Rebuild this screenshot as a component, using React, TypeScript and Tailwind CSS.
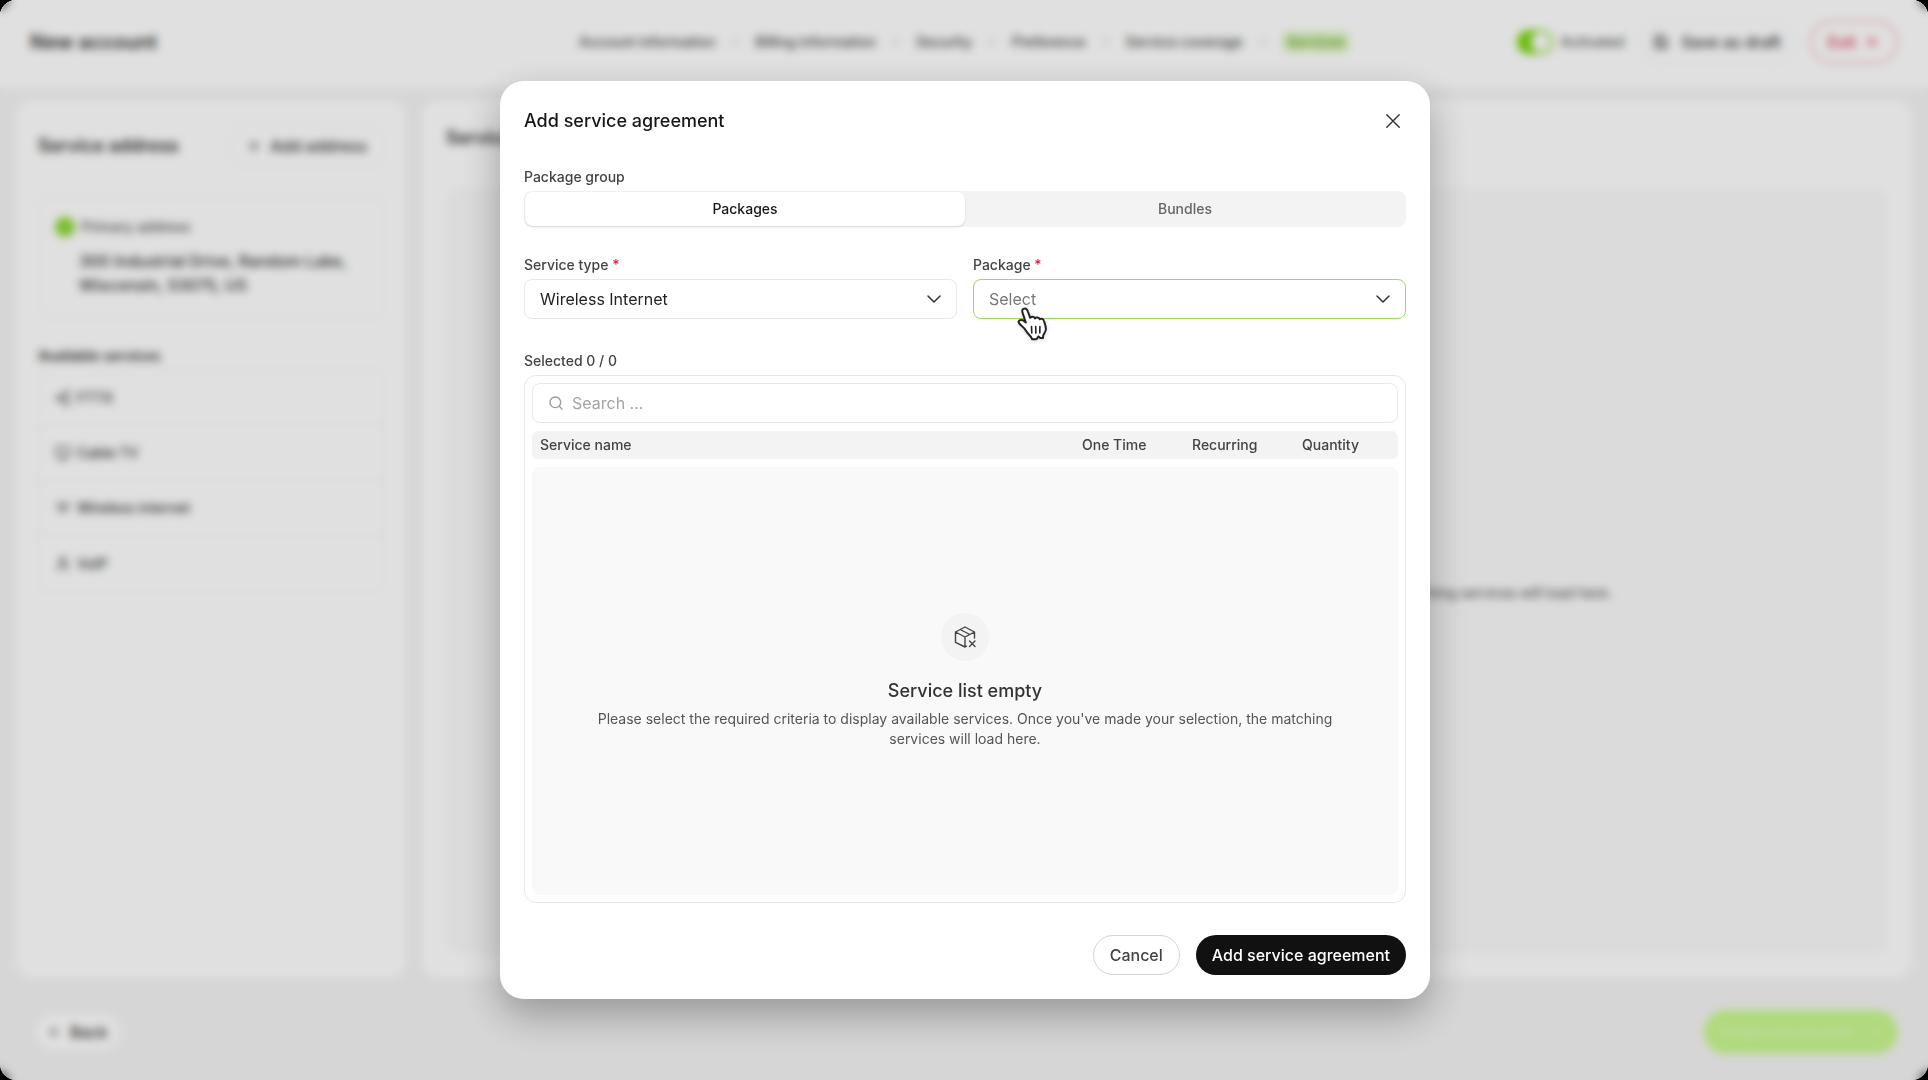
import React, { useState } from 'react';
import {
  ArrowLeft,
  ArrowRight,
  Check,
  ChevronRight,
  Monitor,
  Plus,
  Save,
  Search,
  Share2,
  User,
  Wifi,
  X,
} from 'lucide-react';

const steps = [
  'Account information',
  'Billing information',
  'Security',
  'Preference',
  'Service coverage',
];

const availableServices = [
  { name: 'FTTX', icon: Share2 },
  { name: 'Cable TV', icon: Monitor },
  { name: 'Wireless internet', icon: Wifi },
  { name: 'VoIP', icon: User },
];

const emptyText =
  "Please select the required criteria to display available services. Once you've made your selection, the matching services will load here.";

const CloseIcon: React.FC = () => (
  <svg width="14" height="14" viewBox="0 0 14 14" fill="none" stroke="currentColor" strokeWidth="1.4" strokeLinecap="round">
    <path d="M.8.8l12.400 12.400M13.200.8L.8 13.200" />
  </svg>
);

const ChevronIcon: React.FC = () => (
  <svg
    width="14"
    height="8"
    viewBox="0 0 14 8"
    fill="none"
    stroke="currentColor"
    strokeWidth="1.5"
    strokeLinecap="round"
    strokeLinejoin="round"
    className="pointer-events-none absolute top-4 right-4 text-[#333333]"
  >
    <path d="M1 1l6 6 6-6" />
  </svg>
);

const BoxIcon: React.FC = () => (
  <svg
    width="24"
    height="24"
    viewBox="0 0 24 24"
    fill="none"
    stroke="currentColor"
    strokeWidth="1.4"
    strokeLinecap="round"
    strokeLinejoin="round"
  >
    <path d="M21.5 13V7L12 2 2.500 7v10.300L12 22V12L2.500 7M12 12l9.500-5M7.200 4.500l9.600 5M12 22l1.500-.8" />
    <path d="M16.500 16l5.500 5.500M22 16l-5.500 5.500" />
  </svg>
);

const HandCursor: React.FC = () => (
  <svg width="31" height="34" viewBox="0 0 31 34" className="pointer-events-none absolute top-7 left-11 drop-shadow-sm">
    <path
      d="M5.500 5.500C4.700 3 6 1.500 7.700 1.500c1.800 0 2.600 1.200 3.200 3l2.300 6.300c.6-1.600 4.200-1.600 4.800.6.900-1.500 4-1.300 4.700.9 1.300-1.100 3.700-.5 4.300 1.700.9 2.700 2 5.400 1.900 8.200-.2 2.700-1.900 4.300-2.700 6.300l-.3 2.600-2.600-.1-1.800-1.600-1.800 2.600c-1.300.2-3.200.3-4.700 0l-1-2.200c-1.600-1.700-3.400-3.300-4.700-5.500-1.300-2.200-2.700-4-4.500-5.300C3.200 17.600 1 15.800 1.700 14.200c1-1.900 3.800-1.400 5.300-.3l1.800 1.600z"
      fill="#ffffff"
      stroke="#222222"
      strokeWidth="2"
      strokeLinejoin="round"
    />
    <path d="M14.500 19.500l.3 6.500M18.700 19.500l.1 6.500M22.900 19.500l-.1 6.500" fill="none" stroke="#222222" strokeWidth="1.600" strokeLinecap="round" />
  </svg>
);

const AccountPage: React.FC = () => (
  <div className="flex h-full flex-col bg-[#f4f4f4] text-[#333333]">
    <header className="grid grid-cols-[1fr_auto_1fr] items-center bg-white px-[30px] pt-5 pb-6">
      <h1 className="text-xl font-semibold">New account</h1>

      <nav className="flex items-center gap-3 text-sm font-medium text-[#444444]">
        {steps.map((step) => (
          <React.Fragment key={step}>
            <a href="#">{step}</a>
            <ChevronRight size={16} className="text-[#cccccc]" />
          </React.Fragment>
        ))}
        <a href="#" className="rounded-md bg-[#dcf5bd] px-1 text-[#6ba32f]">
          Services
        </a>
      </nav>

      <div className="flex items-center justify-end gap-4">
        <label className="flex items-center gap-2 text-sm font-medium text-[#555555]">
          <input type="checkbox" defaultChecked className="peer sr-only" />
          <span className="flex h-6 w-9 items-center justify-end rounded-full bg-[#78d60c] p-0.5">
            <span className="h-5 w-5 rounded-full bg-white" />
          </span>
          Activated
        </label>
        <button className="flex h-11 items-center gap-3 rounded-full border border-[#eeeeee] px-3 text-base font-medium">
          <Save size={16} />
          Save as draft
        </button>
        <button className="flex h-11 items-center gap-2 rounded-full border-2 border-[#f4b8bf] px-4 text-base font-medium text-[#dc3545]">
          Exit
          <X size={16} />
        </button>
      </div>
    </header>

    <main className="flex flex-1 gap-4 px-4 pt-3">
      {/* Direcciones y servicios */}
      <section className="w-[390px] rounded-2xl bg-white px-[22px] py-5">
        <div className="mt-1 flex items-center justify-between">
          <h2 className="text-lg font-semibold">Service address</h2>
          <button className="flex h-11 items-center gap-2 rounded-full border border-[#eeeeee] px-4 text-base font-medium">
            <Plus size={16} />
            Add address
          </button>
        </div>

        <div className="mt-7 rounded-xl border border-[#eeeeee] px-4 py-5">
          <div className="flex items-center gap-1.5 text-sm font-medium text-[#555555]">
            <span className="flex h-5 w-5 items-center justify-center rounded-full bg-[#86d62a] text-white">
              <Check size={12} />
            </span>
            Primary address
          </div>
          <p className="mt-3 ml-6 text-base font-medium">300 Industrial Drive, Random Lake, Wisconsin, 53075, US</p>
        </div>

        <h3 className="mt-7 text-sm font-semibold">Available services</h3>
        <ul className="mt-1 divide-y divide-[#eeeeee] rounded-xl border border-[#eeeeee]">
          {availableServices.map(({ name, icon: Icon }) => (
            <li key={name} className="flex h-[55px] items-center gap-1.5 px-4 text-sm font-medium">
              <Icon size={16} />
              {name}
            </li>
          ))}
        </ul>
      </section>

      <section className="flex flex-1 flex-col rounded-2xl bg-white p-6">
        <h2 className="text-lg font-semibold">Services</h2>
        <div className="mt-9 flex flex-1 items-center justify-center rounded-xl bg-[#fafafa]">
          <p className="mt-11 text-sm text-[#444444]">{emptyText}</p>
        </div>
      </section>
    </main>

    <footer className="flex items-center justify-between px-[30px] pt-8 pb-[26px]">
      <button className="ml-1.5 flex h-9 items-center gap-2 rounded-full bg-white px-3 text-base font-medium">
        <ArrowLeft size={14} />
        Back
      </button>
      <button className="flex h-11 items-center gap-3 rounded-full bg-[#c9f98f] px-4 text-sm font-medium text-[#dffabf]">
        Create new account
        <ArrowRight size={16} />
      </button>
    </footer>
  </div>
);

const App: React.FC = () => {
  const [group, setGroup] = useState('Packages');
  const [search, setSearch] = useState('');

  return (
    <div className="h-screen bg-black font-['Inter',sans-serif]">
      <div className="relative h-full overflow-hidden rounded-2xl">
        <AccountPage />

        {/* Modal */}
        <div className="absolute inset-0 flex items-center justify-center bg-black/12 pl-0.5 backdrop-blur-xs">
          <div
            role="dialog"
            aria-labelledby="dialog-title"
            className="flex h-[85vh] w-full max-w-[930px] flex-col rounded-3xl bg-white px-6 pt-[26px] pb-6 shadow-[0_16px_40px_rgba(0,0,0,0.3)]"
          >
            <div className="flex items-center justify-between">
              <h2 id="dialog-title" className="text-lg font-medium text-[#171717]">
                Add service agreement
              </h2>
              <button aria-label="Close" className="p-1.5 text-[#333333]">
                <CloseIcon />
              </button>
            </div>

            <div className="mt-8 text-sm font-medium text-[#444444]">Package group</div>
            <div className="mt-1 grid h-9 grid-cols-2 rounded-lg bg-[#f3f3f3] p-px text-sm font-medium">
              {['Packages', 'Bundles'].map((item) => (
                <button
                  key={item}
                  onClick={() => setGroup(item)}
                  className={
                    group === item
                      ? 'rounded-lg bg-white text-[#171717] shadow-sm'
                      : 'rounded-lg text-[#666666]'
                  }
                >
                  {item}
                </button>
              ))}
            </div>

            <div className="mt-7 grid grid-cols-2 gap-4">
              <div>
                <label htmlFor="serviceType" className="block text-sm font-medium text-[#444444]">
                  Service type <span className="text-[#e11d48]">*</span>
                </label>
                <div className="relative mt-1">
                  <select
                    id="serviceType"
                    className="h-10 w-full appearance-none rounded-lg border border-[#e8e8e8] bg-white px-[15px] text-base text-[#222222]"
                  >
                    <option>Wireless Internet</option>
                  </select>
                  <ChevronIcon />
                </div>
              </div>
              <div>
                <label htmlFor="package" className="block text-sm font-medium text-[#444444]">
                  Package <span className="text-[#e11d48]">*</span>
                </label>
                <div className="relative mt-1">
                  <select
                    id="package"
                    className="h-10 w-full appearance-none rounded-lg border border-[#9adb5c] bg-white px-[15px] text-base text-[#777777]"
                  >
                    <option>Select</option>
                  </select>
                  <ChevronIcon />
                  <HandCursor />
                </div>
              </div>
            </div>

            <div className="mt-8 text-sm font-medium text-[#444444]">Selected 0 / 0</div>
            <div className="mt-1 flex flex-1 flex-col gap-2 rounded-xl border border-[#e8e8e8] p-[7px]">
              <div className="relative">
                <Search size={16} className="absolute top-3 left-4 text-[#999999]" />
                <input
                  type="text"
                  aria-label="Search"
                  placeholder="Search ..."
                  value={search}
                  onChange={(e) => setSearch(e.target.value)}
                  className="h-10 w-full rounded-lg border border-[#e8e8e8] pr-4 pl-[39px] text-base placeholder-[#a3a3a3]"
                />
              </div>

              <table className="w-full table-fixed text-left text-sm text-[#444444]">
                <thead>
                  <tr className="h-7 bg-[#f3f3f3]">
                    <th className="rounded-l-md pl-2 font-medium">Service name</th>
                    <th className="w-[110px] font-medium">One Time</th>
                    <th className="w-[110px] font-medium">Recurring</th>
                    <th className="w-24 rounded-r-md font-medium">Quantity</th>
                  </tr>
                </thead>
              </table>

              <div className="flex flex-1 flex-col items-center justify-center rounded-lg bg-[#f9f9f9] px-14 text-center">
                <div className="flex h-12 w-12 items-center justify-center rounded-full bg-[#f3f3f3] text-[#444444]">
                  <BoxIcon />
                </div>
                <h3 className="mt-4 text-lg font-medium text-[#333333]">Service list empty</h3>
                <p className="mt-1 text-sm text-[#555555]">{emptyText}</p>
              </div>
            </div>

            <div className="mt-8 flex justify-end gap-4">
              <button className="h-10 rounded-full border border-[#d4d4d4] px-4 text-base font-medium text-[#444444]">
                Cancel
              </button>
              <button className="h-10 rounded-full bg-[#111111] px-4 text-base font-medium text-white">
                Add service agreement
              </button>
            </div>
          </div>
        </div>
      </div>
    </div>
  );
};

export default App;
